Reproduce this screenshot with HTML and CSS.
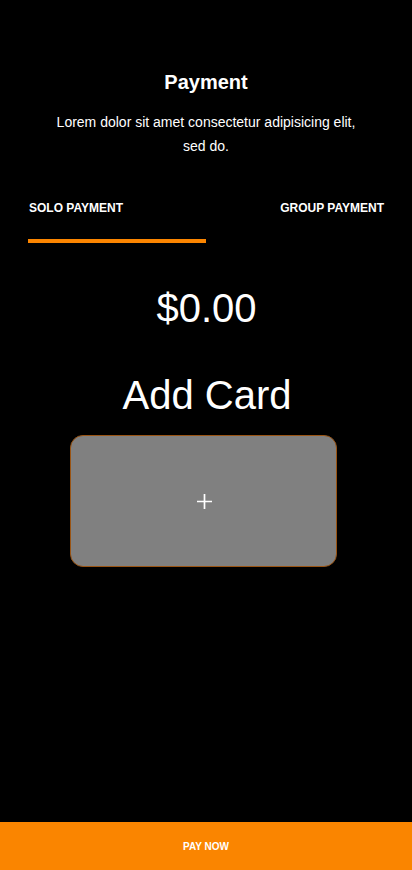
FILE: index.html
```html
<!DOCTYPE html>
<html lang="en">
<head>
<meta charset="utf-8">
<meta name="viewport" content="width=device-width, initial-scale=1">
<title>Payment</title>
<link rel="stylesheet" href="styles.css">
</head>
<body>
<div class="screen">
  <main class="content">
    <header class="header">
      <h1 class="title">Payment</h1>
      <p class="subtitle">Lorem dolor sit amet consectetur adipisicing elit, sed do.</p>
    </header>
    <nav class="tabs">
      <div class="tab-labels">
        <span class="tab tab-active">SOLO PAYMENT</span>
        <span class="tab">GROUP PAYMENT</span>
      </div>
      <div class="tab-indicator-track">
        <div class="tab-indicator"></div>
      </div>
    </nav>
    <div class="amount">$0.00</div>
    <h2 class="add-card-title">Add Card</h2>
    <div class="card-wrap">
      <button class="add-card" type="button" aria-label="Add card">
        <svg class="plus" width="17" height="17" viewBox="0 0 17 17" aria-hidden="true">
          <path d="M8.5 1v15M1 8.5h15" stroke="#ffffff" stroke-width="1.7" fill="none"/>
        </svg>
      </button>
    </div>
  </main>
  <button class="pay-now" type="button">PAY NOW</button>
</div>
</body>
</html>
```
FILE: styles.css
```css
* {
  box-sizing: border-box;
}

html, body {
  margin: 0;
  padding: 0;
  background: #000000;
  height: 100%;
}

body {
  font-family: "Liberation Sans", Arial, sans-serif;
  color: #ffffff;
}

.screen {
  min-height: 100vh;
  display: flex;
  flex-direction: column;
}

.content {
  flex: 1;
  display: flex;
  flex-direction: column;
}

.header {
  padding: 71px 48px 0;
  text-align: center;
}

.title {
  margin: 0;
  font-size: 20px;
  line-height: 23px;
  font-weight: bold;
}

.subtitle {
  margin: 16px 0 0;
  font-size: 14px;
  line-height: 24px;
}

.tabs {
  margin-top: 43px;
  padding: 0 28px;
}

.tab-labels {
  display: flex;
  justify-content: space-between;
  padding-left: 1px;
}

.tab {
  font-size: 12px;
  line-height: 14px;
  font-weight: bold;
  color: #ffffff;
}

.tab-indicator-track {
  margin-top: 24px;
  display: flex;
}

.tab-indicator {
  width: 178px;
  height: 4px;
  background: #fb8500;
}

.amount {
  margin-top: 42px;
  text-align: center;
  font-size: 40px;
  line-height: 46px;
  padding-left: 1px;
}

.add-card-title {
  margin: 41px 0 0;
  text-align: center;
  font-size: 40px;
  line-height: 46px;
  font-weight: normal;
  padding-left: 2px;
}

.card-wrap {
  margin-top: 17px;
  padding-left: 70px;
}

.add-card {
  display: flex;
  align-items: center;
  justify-content: center;
  width: 267px;
  height: 132px;
  background: #808080;
  border: 1px solid #9a5413;
  border-radius: 13px;
  padding: 0 0 0 1px;
  cursor: pointer;
}

.plus {
  display: block;
}

.pay-now {
  height: 48px;
  width: 100%;
  border: none;
  background: #fa8500;
  color: #ffffff;
  font-family: "Liberation Sans", Arial, sans-serif;
  font-size: 10px;
  font-weight: bold;
  padding: 1px 0 0;
  cursor: pointer;
}
```
